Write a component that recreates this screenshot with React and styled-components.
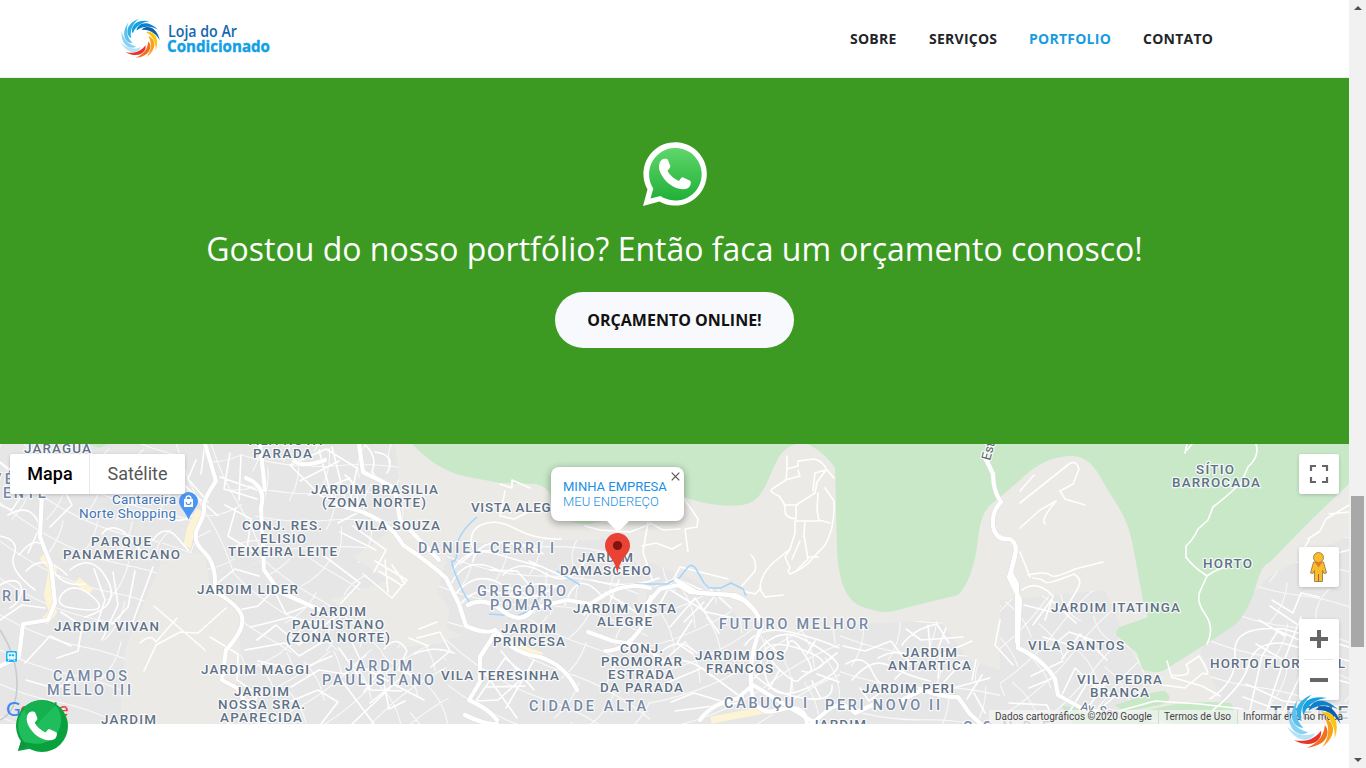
import React from "react";
import styled, { createGlobalStyle, css } from "styled-components";

const GlobalStyle = createGlobalStyle`
  * { box-sizing: border-box; }
  html, body { margin: 0; height: 768px; overflow: hidden; background: #fff; }
  body { font-family: "Open Sans", "Liberation Sans", sans-serif; }
`;

const Window = styled.div`
  display: flex;
  width: 1366px;
  height: 768px;
  overflow: hidden;
`;

const Page = styled.div`
  position: relative;
  display: flex;
  flex-direction: column;
  width: 1349px;
  height: 768px;
  background: #fff;
`;

const Header = styled.header`
  display: flex;
  align-items: center;
  justify-content: space-between;
  height: 78px;
  padding: 0 136px 0 120px;
  border-bottom: 1px solid #ececec;
`;

const Logo = styled.svg`
  display: block;
  width: 152px;
  height: 42px;
  font-family: "Open Sans", sans-serif;
`;

const Nav = styled.nav`
  display: flex;
  gap: 32px;
`;

const NavLink = styled.a`
  font-size: 14px;
  font-weight: 700;
  line-height: 20px;
  width: ${(p) => p.$w}px;
  letter-spacing: 0.25px;
  white-space: nowrap;
  color: ${(p) => (p.$active ? "#189ce0" : "#222529")};
`;

const CallToAction = styled.section`
  display: flex;
  flex-direction: column;
  align-items: center;
  height: 366px;
  padding-top: 64px;
  background: #3c9a22;
`;

const BubbleIcon = styled.svg`
  display: block;
  width: 64px;
  height: 64px;
`;

const Title = styled.h2`
  margin: 18px 0 19px;
  font-size: 32px;
  line-height: 49px;
  font-weight: 400;
  white-space: nowrap;
  color: #fff;
`;

const QuoteButton = styled.button`
  width: 239px;
  height: 56px;
  padding: 0;
  border: 0;
  border-radius: 28px;
  background: #f8f9fc;
  color: #111;
  font: 700 16px/24px "Open Sans", sans-serif;
`;

const MapArea = styled.section`
  position: relative;
  height: 280px;
  overflow: hidden;
  background: #ebeae7;
  font-family: Roboto, "Liberation Sans", sans-serif;
`;

const MapCanvas = styled.svg`
  display: block;
  width: 1349px;
  height: 280px;
`;

const TypeSwitch = styled.div`
  position: absolute;
  left: 10px;
  top: 10px;
  display: flex;
  height: 40px;
  background: #fff;
  border-radius: 2px;
  box-shadow: 0 1px 4px -1px rgba(0, 0, 0, 0.3);
`;

const TypeOption = styled.div`
  width: ${(p) => p.$w}px;
  padding-left: ${(p) => (p.$active ? 1 : 0)}px;
  text-align: center;
  font-size: 18px;
  line-height: 40px;
  color: ${(p) => (p.$active ? "#000" : "#565656")};
  font-weight: ${(p) => (p.$active ? 500 : 400)};
  & + & { border-left: 1px solid #e8e8e8; }
`;

const controlBox = css`
  position: absolute;
  right: 10px;
  width: 40px;
  background: #fff;
  border-radius: 2px;
  box-shadow: 0 1px 4px -1px rgba(0, 0, 0, 0.3);
`;

const MapControl = styled.div`
  ${controlBox}
  top: ${(p) => p.$top}px;
  height: ${(p) => p.$h}px;
  svg { display: block; }
`;

const InfoWindow = styled.div`
  position: absolute;
  left: 551px;
  top: 23px;
  width: 133px;
  height: 54px;
  padding: 12px 12px 0;
  background: #fff;
  border-radius: 8px;
  box-shadow: 0 2px 7px 1px rgba(0, 0, 0, 0.3);
  font-size: 13px;
  line-height: 15px;
  font-weight: 300;
  color: #1a8fe3;
  white-space: nowrap;
  strong { display: block; font-weight: 400; }
  &::after {
    content: "";
    position: absolute;
    left: 55px;
    top: 53px;
    border: 12px solid transparent;
    border-top-color: #fff;
    border-bottom: 0;
  }
`;

const CloseMark = styled.svg`
  position: absolute;
  right: 4px;
  top: 5px;
  width: 9px;
  height: 9px;
`;

const MapPin = styled.svg`
  position: absolute;
  left: 604px;
  top: 88px;
  width: 27px;
  height: 44px;
`;

const Legal = styled.div`
  position: absolute;
  right: 0;
  bottom: 0;
  display: flex;
  height: 14px;
  padding-left: 6px;
  background: rgba(245, 245, 245, 0.7);
  font-size: 10px;
  line-height: 14px;
  color: #444;
  white-space: nowrap;
`;

const LegalItem = styled.span`
  width: ${(p) => p.$w}px;
  & + & { border-left: 1px solid #c9e0c9; padding-left: 5px; }
`;

const Floating = styled.svg`
  position: absolute;
  left: ${(p) => p.$x}px;
  top: ${(p) => p.$y}px;
  width: ${(p) => p.$s}px;
  height: ${(p) => p.$s}px;
`;

const Scrollbar = styled.aside`
  display: flex;
  flex-direction: column;
  align-items: center;
  justify-content: space-between;
  position: relative;
  width: 17px;
  height: 768px;
  padding: 6px 0;
  background: #f1f1f1;
`;

const Thumb = styled.div`
  position: absolute;
  left: 2px;
  top: 496px;
  width: 13px;
  height: 151px;
  background: #a8a8a8;
`;

const Arrow = styled.i`
  border: 4px solid transparent;
  ${(p) =>
    p.$down
      ? "border-bottom: 0; border-top-color: #505050;"
      : "border-top: 0; border-bottom-color: #505050;"}
`;

/* ---------- swirl emblem ---------- */

const bladeColors = [
  "#13a0e2", "#0d82cc", "#0a5fae", "#fdc40c", "#f9a01c",
  "#f27022", "#e8332a", "#b5e2f7", "#8ad2f3", "#5fc2ee", "#2fafe6",
];
const polar = (r, deg) => {
  const a = ((deg - 90) * Math.PI) / 180;
  return `${(30 + r * Math.cos(a)).toFixed(2)} ${(30 + r * Math.sin(a)).toFixed(2)}`;
};

function Swirl() {
  return (
    <g>
      {bladeColors.map((color, i) => {
        const t = 30 + (i * 360) / bladeColors.length;
        return (
          <path
            key={i}
            fill={color}
            d={`M${polar(12.5, t - 86)} C${polar(20.5, t - 74)} ${polar(30, t - 46)} ${polar(28.5, t)} C${polar(25, t - 14)} ${polar(21.5, t - 44)} ${polar(12.5, t - 86)}Z`}
          />
        );
      })}
    </g>
  );
}

const handset =
  "M18.500 18C20 16.500 24 16.500 24.800 17.500L27.300 24Q27.600 25.500 24.400 28.800Q28 35.500 36 39Q38.500 35 39.700 35.300L47.200 38.700C48.200 39.500 48 43 46.300 45C43 48.500 36 47.500 30 44.500C22 40 16 31 16 25C16 21.500 17 19.500 18.500 18Z";

/* ---------- map data, in page pixels ---------- */

const greens = [
  "M412 444C432 465 452 475 474 478L500 483L535 484C549 487 552 495 553 506C560 520 575 524 588 524C620 520 645 497 684 497C703 504 736 510 752 502C771 489 771 460 787 448Q798 441 810 445Q827 455 835 468L837 550C839 581 845 605 870 609C882 614 893 612 905 608L958 595C969 584 975 564 978 540C980 520 984 507 997 500L1020 480C1038 462 1055 456 1073 456C1092 457 1099 475 1109 492C1127 519 1130 529 1134 552L1143 600L1148 617L1120 627Q1112 633 1121 640L1137 653L1142 669Q1152 674 1163 671L1206 644L1235 625Q1249 611 1256 586Q1261 565 1270 562L1310 521L1349 484V444Z",
  "M1115 705C1135 699 1152 691 1165 691Q1176 700 1160 705L1124 712Z",
  "M1062 706L1112 710L1160 724H1073Z",
  "M1166 706Q1196 700 1231 703L1240 724H1175L1130 714Z",
  "M88 444H108L99 448Z",
];

const sands = [
  "M165 552L205 554L210 590L240 610V672L225 724H160L120 690L130 640L150 590Z",
  "M395 444H413L440 468L550 486L560 520H610L600 540H520L470 526L435 548L420 585L405 600L395 560L420 510L400 485Z",
  "M330 600L420 570L450 610L445 630L400 645Z",
];

const districts = [
  { p: "0,444 172,444 192,500 196,555 150,590 125,650 120,724 0,724", a: 28, g: 11 },
  { p: "172,444 240,444 268,500 260,560 205,590 192,520", a: 75, g: 12 },
  { p: "240,444 395,444 405,520 350,560 265,565", a: 12, g: 10 },
  { p: "205,585 265,560 350,555 420,600 395,660 240,665 240,620", a: 46, g: 11 },
  { p: "230,655 400,648 465,640 485,724 220,724", a: -28, g: 10 },
  { p: "450,545 600,535 645,570 630,625 490,650 430,620", a: 17, g: 11 },
  { p: "445,640 610,600 680,605 690,724 450,724", a: 35, g: 12 },
  { p: "645,560 695,580 757,632 900,625 910,724 650,724", a: -20, g: 10 },
  { p: "840,625 940,620 970,660 1015,675 1020,724 840,724", a: 16, g: 12 },
  { p: "1000,600 1105,590 1130,650 1155,680 1110,724 1000,724", a: -36, g: 10 },
  { p: "1200,650 1270,575 1349,535 1349,724 1230,724", a: 24, g: 12 },
];

const lanes = [
  "M0 462L17 475 25 490 12 510 0 505M0 536Q20 540 14 555T35 590M19 555Q40 528 48 558T85 584M26 571Q44 552 67 575M0 585C25 570 28 598 10 608M82 454L62 486 72 505 50 527M8 515Q32 501 40 527L28 553",
  "M102 534Q110 523 124 532L142 552M62 594Q75 580 94 598T66 607Q55 603 62 594M70 570Q92 552 107 579T85 617M94 569L105 600 96 627M113 572L118 605 102 640M135 571L128 607 112 624M153 567L132 624M61 612L82 626 78 651 57 658M25 663L50 636 71 646M26 680L57 689 71 680M0 620L22 605 45 608",
  "M135 455Q146 461 137 474L151 486 140 494M160 455L173 477 171 493M196 460L188 479 208 502M205 444L201 474M192 515Q180 524 169 518M153 540Q163 525 175 535L189 551M182 483L218 516M230 453L224 489 257 499M241 455L239 500M220 477L260 491M225 505L251 519 247 549M236 508L228 536 254 552",
  "M290 465L326 449 357 468 349 507 321 496ZM300 481L339 461M309 495L350 478M319 450L332 498M332 447L345 499M345 475Q361 487 357 513L338 523M365 445Q378 456 372 472L388 491M375 452Q397 455 387 473M353 526L386 550 374 572M340 532L376 550M323 555L360 583 341 603M375 561L407 580 392 598 363 574M379 571L401 585M385 560L388 592M392 565L405 584",
  "M214 586L235 569 259 576M239 610L258 606 274 590 286 614 308 606M251 627L291 617 323 626 344 611M257 640L276 625 299 645 319 628M245 650L285 643 299 656 326 640M258 661L299 670 332 656M210 637L238 654 237 680 257 694 251 720M291 687L319 670 345 674 366 655M289 702L318 690 338 702 321 724",
  "M339 648L358 675 371 690 402 691M351 640L364 668 388 681M384 649Q397 633 407 651L398 670 413 675M364 692L381 669 389 709 405 701M370 703L406 674M391 683L424 700M342 681L374 724M352 724L393 685M417 638L440 632 450 651 431 667M428 646L409 638M437 622L419 629M414 654Q434 645 454 653M476 701L505 658 526 675 498 700 476 701M487 687L525 686M480 666L517 718M501 651L534 690M534 660L506 708",
  "M453 570Q468 545 497 554T543 567M451 584Q466 554 498 570M454 596Q474 570 499 583T539 596M459 606Q476 584 503 594T556 586M474 552Q466 532 481 525T516 529 561 539M473 561Q478 540 506 543T543 554M490 570L517 571 534 590M503 575Q520 558 544 573T584 563M510 594Q532 578 558 587M529 561L560 575M565 605Q577 567 602 596L584 615M591 580Q630 590 659 578M605 592L639 614M619 580L607 609M648 522L643 552 652 579",
  "M660 604L680 567 728 579M669 589L706 612 730 617M670 627L695 598 719 633M692 620L677 643 693 654M705 584L731 608M680 580L708 593M704 602L684 622M719 590L703 611M662 651Q680 636 697 653M666 662Q690 655 711 676M664 684L702 668 738 695M671 702L694 693 731 704M675 711L737 703M685 642L668 657",
  "M754 657Q775 624 803 639T837 663 807 688 765 674Q757 661 765 650T803 650 818 668 799 680 779 669 774 655 788 645 805 655 802 671M745 645Q760 625 790 632T839 648M751 671Q770 693 802 698T832 685M765 640L779 654M787 636L788 646M815 641L807 654M837 653L818 668M839 682L817 674M820 697L812 681M790 698L792 678M769 689L779 671M753 679L765 669",
  "M846 664Q864 653 872 671T893 688M852 680Q872 656 890 666T930 681M860 688L869 701 889 686M878 658Q902 645 910 664L895 679M902 645Q913 629 937 624L949 643M843 646L865 651 891 641 903 657M906 629L921 640 963 637M928 625L930 649M946 628L934 659M972 641L940 655 938 678M963 661L944 682M976 660L972 680M982 675L967 699M942 691L990 678M974 693L985 713M1000 620L995 645 1013 665",
  "M1022 590Q1037 579 1053 596L1045 620M1024 605L1052 612M1033 625L1051 600 1076 623M1043 637L1083 649M1050 648L1069 632 1092 640M1062 659L1080 634 1107 660M1031 676L1063 661M1029 688L1056 677M1061 697L1075 668 1100 691M1070 711L1089 680 1118 698M1081 717L1105 684M1097 711L1118 694M1009 703L1047 705 1053 720M1002 718L1047 711",
  "M1210 699Q1238 681 1235 653T1284 629L1349 647M1213 710Q1243 686 1249 664T1282 643L1349 661M1250 710L1262 656 1279 629M1265 716L1282 666 1301 617M1283 713L1299 678 1315 630M1302 709L1316 675 1329 633M1246 684L1283 701 1342 707M1243 697L1281 711M1256 644L1301 670 1349 683M1274 629L1318 648M1270 606L1310 633M1259 620L1285 636M1272 600L1293 613 1301 593 1319 597",
];

const ruralPaths = [
  "M787 456V469L798 466V461L814 459Q823 461 827 470L834 478M787 469L786 480 772 489Q769 492 779 496L785 505V512Q786 518 796 519V505L815 493 817 482 826 470 815 473 813 491M798 470L800 476 785 480M798 505H784M795 521V533L790 549 785 557 790 568 788 571 790 574Q805 568 812 559L825 545Q835 528 834 501L825 488M795 521H819L817 510 818 493M819 520L830 523M805 521L804 536 808 559 796 571M792 559L800 541M808 557L818 557M790 549L774 562Q760 575 760 589M751 555Q757 560 755 571L742 586M684 499L692 510 698 519 697 527 685 529 688 552M760 589L765 597 783 595M743 591L755 594 761 588",
  "M1020 503L1069 464Q1076 459 1079 469L1073 484 1060 491 1065 499 1085 505M1020 528L1040 510 1056 501Q1040 520 1045 524M1020 552L1030 577M1028 575Q1046 571 1050 575T1075 569L1103 562M1020 491L1034 475M1033 578Q1043 579 1045 582T1074 574Q1083 580 1078 588L1067 607",
  "M1256 444Q1260 456 1248 467L1241 483Q1225 498 1213 507L1208 520 1198 529Q1193 540 1186 546L1186 558M1186 557Q1192 566 1207 576L1201 589Q1195 600 1205 614T1207 644M1207 576Q1218 568 1228 567M1187 444L1185 453M1192 444L1187 450M1349 505L1326 519 1320 531 1308 539M1349 512L1329 514M1349 550L1330 555M1309 540L1303 550",
  "M500 484L512 488V480L530 488M505 491L500 516 514 519 537 508M650 523L663 530 680 529M460 564L474 552 495 550M642 546L656 543 672 549 681 544M585 526L600 530 630 532 651 524",
  "M144 671L156 645 180 632 198 633 226 608M154 606L205 650M140 643Q151 633 156 642L177 618",
  "M1167 661L1171 675Q1195 678 1186 665L1199 656Q1214 679 1203 673L1185 688 1163 685M1171 677L1202 686 1220 696M1115 712L1155 701 1200 704 1243 709",
];

const avenues = [
  "M205 444L216 481Q203 500 204 507T198 527 204 552 215 592Q239 605 242 617T226 650L222 680 237 688 248 708",
  "M246 478Q267 486 261 508L264 570 280 592 320 610M260 444L265 490M294 461Q304 468 325 460",
  "M359 444L363 472Q380 480 398 490 M395 490L400 520Q419 539 439 560 M335 505Q385 513 403 545Q430 563 446 578L459 604 466 626Q486 635 495 630L504 640Q517 654 540 657Q565 665 577 690",
  "M46 445L42 490 40 537 51 565 55 603 48 620 23 624 19 657 0 666",
  "M494 635L480 657 480 682 469 700Q489 709 497 720M465 715Q485 725 497 724",
  "M468 605Q484 596 503 611T534 608L567 600 590 604 606 594Q628 582 650 588",
  "M645 606L660 589 678 585 690 592 729 595 744 600 751 607",
  "M676 580L698 593 735 595Q756 605 762 626Q749 652 751 685T779 710 807 724",
  "M984 455L993 474Q993 491 1001 502Q992 510 993 526Q996 541 1010 539Q1018 544 1015 556T1009 577L1020 600Q1018 632 1018 648 1043 659 1055 679L1058 695 1085 710 1104 712",
  "M1015 554L1011 573 1017 584V642",
  "M742 697L724 702Q707 709 700 720M740 696L753 685 817 724M811 724L828 710Q843 699 855 713L872 705 M920 689Q945 698 958 697L970 714 981 724M902 700L920 691",
  "M605 651Q629 651 646 620L651 597M588 632L613 641 644 646 667 664",
];
const creeks = [
  "M635 584L667 584 680 577 688 567Q692 563 696 569L704 583 709 588H721L731 583 743 589 746 596",
  "M477 517Q457 534 457 548T453 561 460 585 476 602M489 614L517 616 530 610 545 590M557 571L580 585",
];

const labels = [
  [24, 91, 452.6, "JARAGUÁ"], [246, 322, 445, "VILA NOVA"], [253, 312, 458, "PARADA"],
  [-8, 13, 483, "VÉ", 1], [3, 46, 497, "ENTE", 1],
  [91, 151, 546, "PARQUE"], [63, 180, 559, "PANAMERICANO"],
  [242, 322, 530, "CONJ. RES."], [260, 306, 543, "ELISIO"], [228, 337, 556, "TEIXEIRA LEITE"],
  [311, 438, 494, "JARDIM BRASILIA"], [322, 426, 507, "(ZONA NORTE)"], [355, 440, 530, "VILA SOUZA"],
  [471, 568, 512, "VISTA ALEGRE"], [418, 554, 552, "DANIEL CERRI I", 1],
  [197, 298, 594, "JARDIM LIDER"], [477, 566, 595, "GREGÓRIO", 1], [490, 552, 609, "POMAR", 1],
  [578, 633, 562, "JARDIM"], [560, 651, 575, "DAMASCENO"],
  [2, 30, 600, "RIL", 1], [54, 159, 631, "JARDIM VIVAN"],
  [310, 366, 616, "JARDIM"], [292, 384, 629, "PAULISTANO"], [286, 390, 642, "(ZONA NORTE)"],
  [201, 309, 674, "JARDIM MAGGI"], [53, 127, 680, "CAMPOS", 1], [47, 131, 694, "MELLO III", 1],
  [234, 289, 696, "JARDIM"], [218, 305, 709, "NOSSA SRA."], [220, 302, 722, "APARECIDA"],
  [101, 156, 724, "JARDIM"], [345, 412, 670, "JARDIM", 1], [322, 434, 684, "PAULISTANO", 1],
  [501, 556, 633, "JARDIM"], [493, 565, 646, "PRINCESA"], [441, 559, 680, "VILA TERESINHA"],
  [573, 676, 613, "JARDIM VISTA"], [597, 652, 626, "ALEGRE"],
  [620, 663, 653, "CONJ."], [601, 682, 666, "PROMORAR"], [608, 674, 679, "ESTRADA"], [600, 683, 692, "DA PARADA"],
  [529, 646, 710, "CIDADE ALTA", 1], [719, 868, 628, "FUTURO MELHOR", 1],
  [695, 784, 660, "JARDIM DOS"], [706, 773, 673, "FRANCOS"],
  [902, 957, 657, "JARDIM"], [888, 971, 670, "ANTARTICA"],
  [724, 807, 707, "CABUÇU I", 1], [825, 940, 709, "PERI NOVO II", 1], [862, 954, 693, "JARDIM PERI"],
  [811, 866, 729, "JARDIM"], [963, 1050, 731, "CONDE", 1],
  [1196, 1234, 474, "SÍTIO"], [1172, 1260, 487, "BARROCADA"], [1203, 1252, 568, "HORTO"],
  [1051, 1180, 612, "JARDIM ITATINGA"], [1028, 1124, 650, "VILA SANTOS"],
  [1077, 1162, 684, "VILA PEDRA"], [1090, 1149, 697, "BRANCA"],
  [1210, 1345, 668, "HORTO FLORESTAL"],
];

function CityMap() {
  return (
    <MapCanvas viewBox="0 444 1349 280">
      <rect y="444" width="1349" height="280" fill="#ebeae7" />
      <defs>
        {districts.map((d, i) => (
          <clipPath id={`district${i}`} key={i}><polygon points={d.p} /></clipPath>
        ))}
      </defs>
      {districts.map((d, i) => {
        const pts = d.p.split(" ").map((s) => s.split(",").map(Number));
        const cx = pts.reduce((n, p) => n + p[0], 0) / pts.length;
        const cy = pts.reduce((n, p) => n + p[1], 0) / pts.length;
        let path = "";
        for (let k = -16; k <= 16; k++) {
          const o = k * d.g * 1.4;
          if (k % 2) path += `M-160 ${o}Q-70 ${o + 22} 0 ${o}T160 ${o}`;
          const y = ((k * 37) % 90) - 20;
          path += `M${o} ${y}q7 22 0 44M${o + 7} ${y - 85}q-8 20 1 34`;
        }
        return (
          <g key={i} clipPath={`url(#district${i})`}>
            <polygon points={d.p} fill="#e6e6e6" />
            <path d={path} transform={`translate(${cx} ${cy}) rotate(${d.a})`} fill="none" stroke="#f9f9f9" strokeWidth="1.1" />
          </g>
        );
      })}
      {sands.map((d) => <path key={d} d={d} fill="#ebeae7" />)}
      {greens.map((d) => <path key={d} d={d} fill="#c8e8c8" />)}
      <g fill="none" stroke="#fdf3d5" strokeLinejoin="round">
        <path d="M200 510L191 529 187 547" strokeWidth="8" />
        <path d="M42 556L53 568 48 595 53 612 44 622" strokeWidth="8" />
        <path d="M77 580L91 592M492 633L512 645 542 656M711 720L765 710" strokeWidth="7" />
      </g>
      <g fill="none" stroke="#fff" strokeLinejoin="round" strokeLinecap="round">
        {[...lanes, ...ruralPaths].map((d) => <path key={d} d={d} strokeWidth="1.6" />)}
      </g>
      {creeks.map((d) => <path key={d} d={d} fill="none" stroke="#a5d5fb" strokeWidth="1.6" />)}
      <g fill="none" strokeLinejoin="round" strokeLinecap="round">
        {avenues.map((d) => <path key={d} d={d} stroke="#dcdcdc" strokeWidth="5" />)}
        {avenues.map((d) => <path key={d} d={d} stroke="#fff" strokeWidth="4.2" />)}
        <path d="M0 630Q17 656 17 684T0 720" stroke="#c8cbd0" strokeWidth="1.6" />
      </g>
      <g fontWeight="500" paintOrder="stroke" stroke="#fff" strokeOpacity="0.8" strokeWidth="2.5" strokeLinejoin="round">
        {labels.map(([a, b, y, text, area], i) => (
          <text key={i} x={a} y={area ? y + 0.7 : y} textLength={b - a} fontSize={area ? 14.4 : 13.4} fill={area ? "#7688a4" : "#5f7187"}>
            {text}
          </text>
        ))}
        <text x="1270" y="719" textLength="130" fontSize="19" fill="#62748a">TREMEMBÉ</text>
        <text transform="translate(990 461) rotate(-75)" fontSize="13" fill="#555f6b" fontWeight="400">Estr. S</text>
        <text transform="translate(1080 710) rotate(12)" fontSize="12" fill="#62748a" fontWeight="400">Av. Sen.</text>
        <g fill="#4275b5" fontWeight="400" fontSize="13.5">
          <text x="112" y="504" textLength="64">Cantareira</text>
          <text x="79" y="518" textLength="97">Norte Shopping</text>
        </g>
      </g>
      <path d="M188.500 492a9.500 9.500 0 0 1 9.500 9.500c0 5-5 8-9.500 18-4.500-10-9.500-13-9.500-18a9.500 9.500 0 0 1 9.500-9.500z" fill="#4b96f3" />
      <path d="M184 499h9v8h-9z" fill="#fff" />
      <path d="M186 499a2.500 3 0 0 1 5 0" fill="none" stroke="#fff" strokeWidth="1.3" />
      <path d="M186 502a2.500 2.500 0 0 0 5 0" fill="none" stroke="#4b96f3" strokeWidth="1.2" />
      <rect x="6" y="651" width="11" height="11" rx="1.500" fill="#14b4f6" />
      <path d="M8 653h7v6H8z M9 660l-1 1.500M14 660l1 1.500" fill="#fff" stroke="#fff" />
      <path d="M9 654.500h2v1.500H9zm3 0h2v1.500h-2zM9 658h1m3 0h1" fill="#14b4f6" stroke="#14b4f6" strokeWidth=".5" />
      <g fontFamily="Lato, sans-serif" fontSize="20" fontWeight="500">
        <text x="6" y="716" fill="#4285f4">G</text><text x="20" y="716" fill="#ea4335">o</text>
        <text x="31" y="716" fill="#fbbc05">o</text><text x="42" y="716" fill="#4285f4">g</text>
        <text x="53" y="716" fill="#34a853">l</text><text x="58" y="716" fill="#ea4335">e</text>
      </g>
    </MapCanvas>
  );
}

export default function App() {
  return (
    <>
      <GlobalStyle />
      <Window>
        <Page>
          <Header>
            <Logo viewBox="0 0 152 42">
              <g transform="translate(-1 -.5) scale(.7)"><Swirl /></g>
              <text x="48" y="18.500" fontSize="16" fontWeight="600" fill="#1667b1" textLength="69" lengthAdjust="spacingAndGlyphs">Loja do Ar</text>
              <text x="47" y="34.300" fontSize="16.500" fontWeight="700" fill="#12a0e3" stroke="#12a0e3" strokeWidth=".4" textLength="103" lengthAdjust="spacingAndGlyphs">Condicionado</text>
            </Logo>
            <Nav>
              <NavLink $w={47}>SOBRE</NavLink>
              <NavLink $w={68}>SERVIÇOS</NavLink>
              <NavLink $w={82} $active>PORTFOLIO</NavLink>
              <NavLink $w={70}>CONTATO</NavLink>
            </Nav>
          </Header>
          <CallToAction>
            <BubbleIcon viewBox="0 0 64 64">
              <defs>
                <linearGradient id="bubble" x2="0" y2="1">
                  <stop stopColor="#60d66a" /><stop offset="1" stopColor="#20b038" />
                </linearGradient>
              </defs>
              <path d="M0 64L4.500 47.500A31.700 31.700 0 1 1 16.500 59.500Z" fill="#fff" />
              <path d="M7.500 56.500L10.300 46.500A26.300 26.300 0 1 1 17.500 53.900Z" fill="url(#bubble)" />
              <path d={handset} fill="#fff" />
            </BubbleIcon>
            <Title>Gostou do nosso portfólio? Então faca um orçamento conosco!</Title>
            <QuoteButton>ORÇAMENTO ONLINE!</QuoteButton>
          </CallToAction>
          <MapArea>
            <CityMap />
            <TypeSwitch>
              <TypeOption $w={79} $active>Mapa</TypeOption>
              <TypeOption $w={96}>Satélite</TypeOption>
            </TypeSwitch>
            <MapPin viewBox="0 0 27 44">
              <path d="M13.500 1A12.500 12.500 0 0 1 26 13.500C26 23 16 25 13.500 42 11 25 1 23 1 13.500A12.500 12.500 0 0 1 13.500 1z" fill="#ea4335" />
              <circle cx="13.500" cy="13.500" r="4.600" fill="#811411" />
            </MapPin>
            <InfoWindow>
              <strong>MINHA EMPRESA</strong>
              MEU ENDEREÇO
              <CloseMark viewBox="0 0 9 9"><path d="M.7.7l7.600 7.600M8.300.7L.7 8.300" stroke="#555" strokeWidth="1.200" /></CloseMark>
            </InfoWindow>
            <MapControl $top={10} $h={40}>
              <svg width="40" height="40"><path d="M12 17v-5h5M23 12h5v5M28 23v5h-5M17 28h-5v-5" fill="none" stroke="#666" strokeWidth="2.200" /></svg>
            </MapControl>
            <MapControl $top={103} $h={40}>
              <svg width="40" height="40">
                <path d="M14.500 15h10l3 11-2.500.5-1.500-3v11h-8v-11l-1.500 3-2.500-.5z" fill="#fbbc2c" stroke="#8a7340" strokeWidth=".8" />
                <circle cx="19.500" cy="10.500" r="5" fill="#fbbc2c" stroke="#8a7340" strokeWidth=".8" />
                <path d="M15.500 15h8l-4 5.500z" fill="#e57b28" /><path d="M19.500 27v8" stroke="#8a7340" />
              </svg>
            </MapControl>
            <MapControl $top={175} $h={81}>
              <svg width="40" height="81"><path d="M11 20h18M20 11v18M11 61h18" stroke="#666" strokeWidth="4" /><path d="M5 40.500h30" stroke="#e6e6e6" /></svg>
            </MapControl>
            <Legal>
              <LegalItem $w={163}>Dados cartográficos ©2020 Google</LegalItem>
              <LegalItem $w={79}>Termos de Uso</LegalItem>
              <LegalItem $w={112}>Informar erro no mapa</LegalItem>
            </Legal>
          </MapArea>
          <Floating $x={15} $y={699} $s={54} viewBox="0 0 54 54">
            <circle cx="27" cy="27" r="26" fill="#09a03e" />
            <path d="M3 52L6.500 40L19 49Z" fill="#09a03e" />
            <path d="M20 2.200A26 26 0 0 1 43 9A24 24 0 0 1 18 44.500L9 43A26 26 0 0 1 20 2.200Z" fill="#20bd5c" />
            <path d="M8.500 9A26 26 0 0 1 30 1.500L40 7L18 29L12 17Z" fill="#15b04f" />
            <path d="M3 52L6.500 41L12 46Z" fill="#12943f" />
            <path d={handset} transform="translate(-3.500 -3.500) scale(.95)" fill="#fff" />
          </Floating>
          <Floating $x={1285} $y={693} $s={57} viewBox="0 0 60 60"><Swirl /></Floating>
        </Page>
        <Scrollbar><Arrow /><Thumb /><Arrow $down /></Scrollbar>
      </Window>
    </>
  );
}
